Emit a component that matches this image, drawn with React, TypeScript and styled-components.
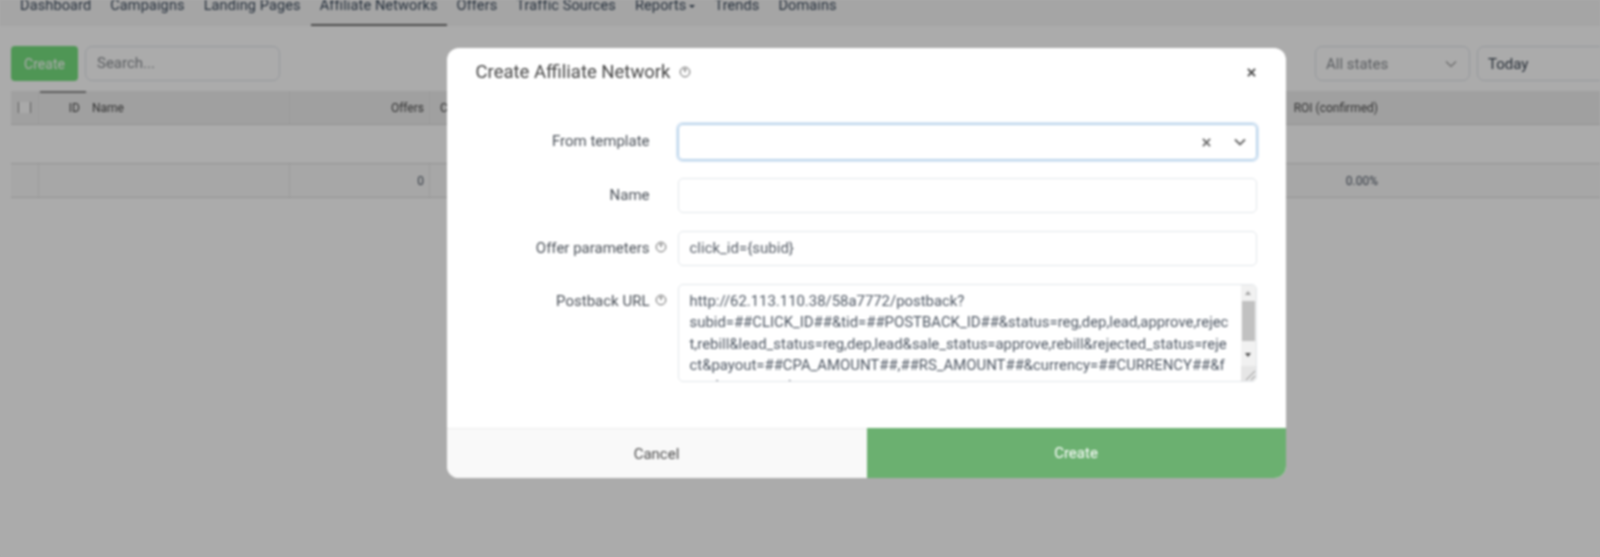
import React from "react";
import styled, { createGlobalStyle } from "styled-components";

const Global = createGlobalStyle`
  html, body { margin: 0; padding: 0; height: 100%; overflow: hidden; background: #ababab; }
  body { font-family: Roboto, "Liberation Sans", sans-serif; color: #333; }
  * { box-sizing: border-box; }
`;

const Soft = styled.div`
  width: 1600px;
  height: 557px;
  overflow: hidden;
  position: relative;
  filter: blur(0.8px);
`;

const Page = styled.div`
  display: flex;
  flex-direction: column;
  background: #fff;
  height: 557px;
`;

const Nav = styled.nav`
  display: flex;
  height: 26px;
  padding-left: 11px;
  background: #f7f7f7;
  overflow: hidden;
`;

const NavItem = styled.a<{ $active?: boolean }>`
  display: block;
  height: 26px;
  margin-right: 1px;
  padding: 0 9px;
  font-size: 14.55px;
  line-height: 12px;
  letter-spacing: 0.1px;
  white-space: nowrap;
  color: #3b4a5c;
  border-bottom: 2px solid ${(p) => (p.$active ? "#707070" : "transparent")};
`;

const Caret = styled.span`
  display: inline-block;
  margin-left: 3px;
  vertical-align: 2px;
  border: 3px solid transparent;
  border-top: 3px solid #3b4a5c;
  border-bottom: 0;
`;

const Toolbar = styled.div`
  display: flex;
  align-items: center;
  padding: 20px 0 10px 11px;
  gap: 7px;
`;

const GreenButton = styled.div`
  flex: none;
  width: 67px;
  height: 35px;
  border-radius: 4px;
  background: #77e07f;
  color: #fff;
  font-size: 14px;
  display: flex;
  align-items: center;
  justify-content: center;
`;

const Search = styled.div`
  flex: none;
  width: 195px;
  height: 35px;
  margin-right: 1028px;
  padding-left: 11px;
  border: 1px solid #dfe4ea;
  border-radius: 7px;
  background: #fff;
  color: #8b8f94;
  font-size: 15px;
  line-height: 33px;
`;

const FilterBox = styled.div<{ $wide?: boolean }>`
  flex: none;
  width: ${(p) => (p.$wide ? "140px" : "155px")};
  height: 35px;
  padding: 0 12px 0 10px;
  border: 1px solid #dfe4ea;
  border-radius: 7px;
  background: #fff;
  font-size: 15px;
  display: flex;
  align-items: center;
  justify-content: space-between;
`;

const FilterText = styled.span<{ $muted?: boolean }>`
  color: ${(p) => (p.$muted ? "#8b8f94" : "#3d4856")};
`;

const Row = styled.div<{ $kind: "head" | "empty" | "data" }>`
  position: relative;
  display: grid;
  grid-template-columns: 28px 46px 205px 140px 857px 96px 1fr;
  margin-left: 11px;
  height: ${(p) => (p.$kind === "empty" ? "39px" : "34px")};
  background: ${(p) => (p.$kind === "head" ? "#efefef" : p.$kind === "data" ? "#fafafa" : "#fff")};
  border-bottom: 1px solid #dcdcdc;
  font-size: 12px;
  color: ${(p) => (p.$kind === "head" ? "#4b4b4b" : "#4e5866")};
`;

const SortMark = styled.span`
  position: absolute;
  left: 29px;
  top: 0;
  width: 46px;
  height: 2px;
  background: #8a8a8a;
`;

const Cell = styled.div<{ $align?: "right"; $line?: boolean; $pad?: number }>`
  display: flex;
  align-items: center;
  white-space: nowrap;
  padding: 0 ${(p) => p.$pad ?? 5}px;
  justify-content: ${(p) => (p.$align === "right" ? "flex-end" : "flex-start")};
  border-right: ${(p) => (p.$line ? "1px solid #e8e8e8" : "0")};
`;

const Check = styled.span`
  width: 14px;
  height: 11px;
  background: #fdfdfd;
  border-left: 1.5px solid #8a8a8a;
  border-right: 1.5px solid #8a8a8a;
`;

const Backdrop = styled.div`
  position: absolute;
  inset: 0;
  background: rgba(0, 0, 0, 0.33);
  display: flex;
  justify-content: center;
  align-items: flex-start;
  padding: 48px 0 0 132px;
`;

const Modal = styled.div`
  width: 839px;
  height: 430px;
  background: #fff;
  border-radius: 12px;
  overflow: hidden;
  display: flex;
  flex-direction: column;
`;

const Header = styled.header`
  height: 48px;
  padding: 0 30px 0 29px;
  display: flex;
  align-items: center;
  justify-content: space-between;
`;

const Title = styled.h2`
  margin: 0;
  display: flex;
  align-items: center;
  gap: 8px;
  font-size: 18.5px;
  font-weight: 400;
  color: #444;
`;

const Form = styled.div`
  flex: 1;
  display: flex;
  flex-direction: column;
  padding: 28px 29px 0 0;
`;

const Field = styled.div<{ $gap: number }>`
  display: grid;
  grid-template-columns: 203px 1fr;
  column-gap: 28px;
  margin-bottom: ${(p) => p.$gap}px;
`;

const Label = styled.label<{ $top?: number }>`
  display: flex;
  justify-content: flex-end;
  align-items: ${(p) => (p.$top ? "flex-start" : "center")};
  padding-top: ${(p) => p.$top ?? 0}px;
  padding-bottom: ${(p) => (p.$top ? 0 : 2)}px;
  font-size: 15px;
  color: #4a5058;
  position: relative;
`;

const LabelHelp = styled.span<{ $shift: number }>`
  position: absolute;
  right: -17px;
  margin-top: ${(p) => p.$shift}px;
  display: flex;
`;

const Input = styled.div`
  height: 35px;
  padding: 0 11px;
  border: 1px solid #e2e6ea;
  border-radius: 5px;
  font-size: 15px;
  line-height: 32px;
  color: #555c66;
`;

const SelectBox = styled.div`
  height: 36px;
  padding: 0 10px 0 0;
  border: 1px solid #aecde8;
  border-radius: 5px;
  box-shadow: 0 0 0 2px #d4e4f3;
  display: flex;
  align-items: center;
  justify-content: flex-end;
  gap: 23px;
`;

const TextBox = styled.div`
  position: relative;
  height: 98px;
  padding: 6px 26px 0 11px;
  border: 1px solid #e2e6ea;
  border-radius: 5px;
  overflow: hidden;
  font-size: 14.9px;
  line-height: 21.3px;
  color: #4e5763;
`;

const TextLine = styled.div`
  white-space: nowrap;
`;

const Scrollbar = styled.div`
  position: absolute;
  right: 0;
  top: 0;
  bottom: 0;
  width: 15px;
  background: #f1f1f1;
  display: flex;
  flex-direction: column;
  align-items: center;
  justify-content: space-between;
`;

const Thumb = styled.div`
  position: absolute;
  left: 1px;
  right: 1px;
  top: 16px;
  height: 40px;
  background: #c1c1c1;
`;

const ArrowBtn = styled.span<{ $down?: boolean }>`
  width: 0;
  height: 0;
  margin: ${(p) => (p.$down ? "0 0 24px" : "6px 0 0")};
  border-left: 3.5px solid transparent;
  border-right: 3.5px solid transparent;
  ${(p) => (p.$down ? "border-top: 4px solid #505050;" : "border-bottom: 4px solid #a3a3a3;")}
`;

const Grip = styled.svg`
  position: absolute;
  right: 0;
  bottom: 0;
  background: #e6e6e6;
`;

const Footer = styled.footer`
  display: grid;
  grid-template-columns: 420px 1fr;
  height: 50px;
`;

const Cancel = styled.div`
  background: #f9f9f9;
  border-top: 1px solid #ececec;
  color: #4d4d4d;
  font-size: 15px;
  display: flex;
  align-items: center;
  justify-content: center;
`;

const Submit = styled.div`
  background: #6bb070;
  color: #fff;
  font-size: 15px;
  display: flex;
  align-items: center;
  justify-content: center;
`;

const Help = () => (
  <svg width="12" height="12" viewBox="0 0 12 12" fill="none" stroke="#666" strokeWidth="1">
    <circle cx="6" cy="6" r="4.8" />
    <path d="M4.2 3.4h3.4M6 3.4v3" />
  </svg>
);

const Cross = ({ color = "#444", size = 10 }: { color?: string; size?: number }) => (
  <svg width={size} height={size} viewBox="0 0 10 10" fill="none" stroke={color} strokeWidth="2">
    <path d="M1 1l8 8M9 1l-8 8" />
  </svg>
);

const Chevron = ({ color = "#666", w = 1.8 }: { color?: string; w?: number }) => (
  <svg width="12" height="8" viewBox="0 0 12 8" fill="none" stroke={color} strokeWidth={w}>
    <path d="M1 1.5l5 5 5-5" />
  </svg>
);

const navItems = ["Dashboard", "Campaigns", "Landing Pages", "Affiliate Networks", "Offers", "Traffic Sources"];

const postback = [
  "http://62.113.110.38/58a7772/postback?",
  "subid=##CLICK_ID##&tid=##POSTBACK_ID##&status=reg,dep,lead,approve,rejec",
  "t,rebill&lead_status=reg,dep,lead&sale_status=approve,rebill&rejected_status=reje",
  "ct&payout=##CPA_AMOUNT##,##RS_AMOUNT##&currency=##CURRENCY##&f",
  "raud_status=reject",
];

export default function App() {
  return (
    <>
      <Global />
      <Soft>
        <Page>
          <Nav>
            {navItems.map((n) => (
              <NavItem key={n} $active={n === "Affiliate Networks"}>{n}</NavItem>
            ))}
            <NavItem>Reports<Caret /></NavItem>
            <NavItem>Trends</NavItem>
            <NavItem>Domains</NavItem>
          </Nav>
          <Toolbar>
            <GreenButton>Create</GreenButton>
            <Search>Search...</Search>
            <FilterBox>
              <FilterText $muted>All states</FilterText>
              <Chevron color="#a0a0a0" w={1.2} />
            </FilterBox>
            <FilterBox $wide>
              <FilterText>Today</FilterText>
            </FilterBox>
          </Toolbar>
          <Row $kind="head">
            <SortMark />
            <Cell $line $pad={7}><Check /></Cell>
            <Cell $align="right">ID</Cell>
            <Cell $line $pad={7}>Name</Cell>
            <Cell $align="right" $line>Offers</Cell>
            <Cell $pad={10}>Clicks</Cell>
            <Cell $align="right">ROI (confirmed)</Cell>
            <Cell />
          </Row>
          <Row $kind="empty" />
          <Row $kind="data">
            <Cell $line />
            <Cell />
            <Cell $line />
            <Cell $align="right" $line>0</Cell>
            <Cell />
            <Cell $align="right">0.00%</Cell>
            <Cell />
          </Row>
        </Page>
        <Backdrop>
          <Modal>
            <Header>
              <Title>Create Affiliate Network <Help /></Title>
              <Cross size={9} />
            </Header>
            <Form>
              <Field $gap={18}>
                <Label>From template</Label>
                <SelectBox>
                  <Cross color="#666" size={9} />
                  <Chevron />
                </SelectBox>
              </Field>
              <Field $gap={18}>
                <Label>Name</Label>
                <Input />
              </Field>
              <Field $gap={18}>
                <Label>Offer parameters<LabelHelp $shift={-2}><Help /></LabelHelp></Label>
                <Input>click_id={"{subid}"}</Input>
              </Field>
              <Field $gap={0}>
                <Label $top={8}>Postback URL<LabelHelp $shift={2}><Help /></LabelHelp></Label>
                <TextBox>
                  {postback.map((line) => (
                    <TextLine key={line}>{line}</TextLine>
                  ))}
                  <Scrollbar>
                    <Thumb />
                    <ArrowBtn />
                    <ArrowBtn $down />
                    <Grip width="15" height="15" viewBox="0 0 15 15" fill="none" stroke="#8a8a8a">
                      <path d="M5 14L14 5M10 14l4-4" />
                    </Grip>
                  </Scrollbar>
                </TextBox>
              </Field>
            </Form>
            <Footer>
              <Cancel>Cancel</Cancel>
              <Submit>Create</Submit>
            </Footer>
          </Modal>
        </Backdrop>
      </Soft>
    </>
  );
}
